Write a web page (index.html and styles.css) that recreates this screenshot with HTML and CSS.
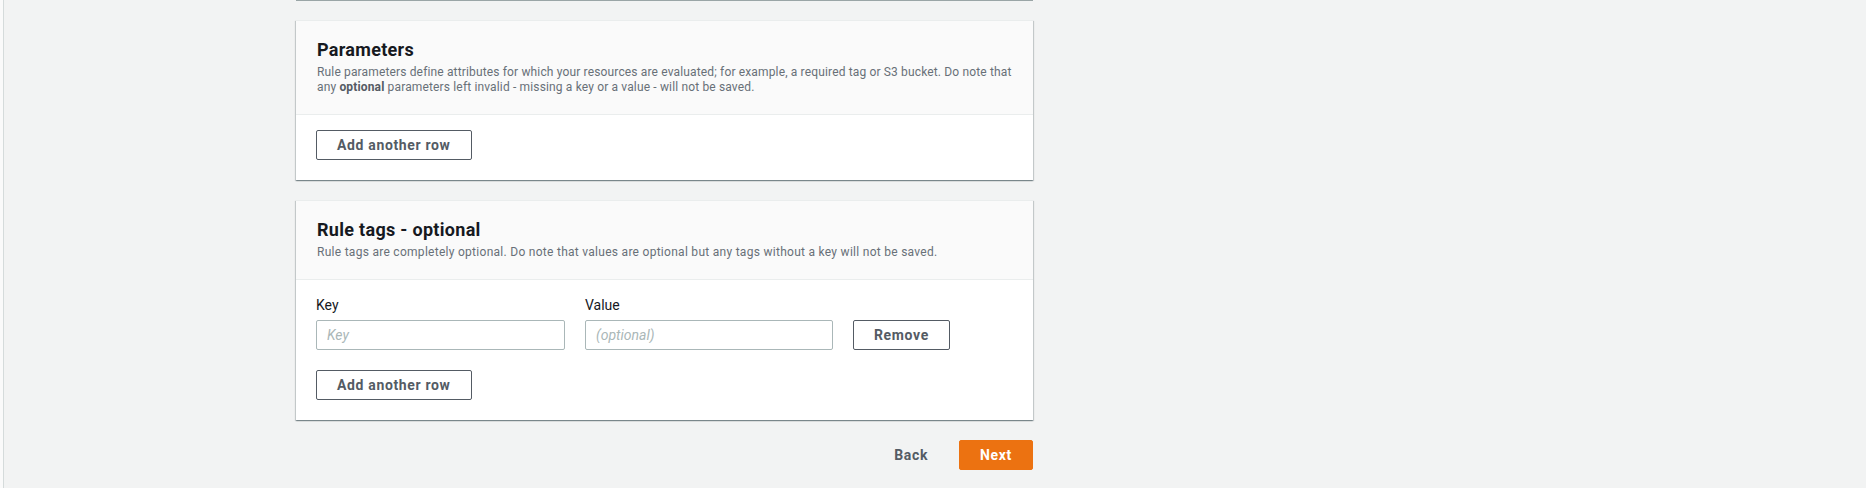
FILE: index.html
```html
<!DOCTYPE html>
<html lang="en">
<head>
<meta charset="utf-8">
<title>Rule settings</title>
<link rel="stylesheet" href="styles.css">
</head>
<body>
<div class="page">
  <div class="column">
    <div class="prev-card"></div>

    <section class="card">
      <header class="card-header">
        <h2 class="card-title">Parameters</h2>
        <p class="card-desc">Rule parameters define attributes for which your resources are evaluated; for example, a required tag or S3 bucket. Do note that any <b class="em">optional</b> parameters left invalid - missing a key or a value - will not be saved.</p>
      </header>
      <div class="card-body">
        <button class="btn" type="button">Add another row</button>
      </div>
    </section>

    <section class="card">
      <header class="card-header">
        <h2 class="card-title">Rule tags - optional</h2>
        <p class="card-desc card-desc-wide">Rule tags are completely optional. Do note that values are optional but any tags without a key will not be saved.</p>
      </header>
      <div class="card-body">
        <div class="tag-row">
          <label class="field-label" for="tag-key">Key</label>
          <label class="field-label" for="tag-value">Value</label>
          <span></span>
          <input class="input" id="tag-key" type="text" placeholder="Key">
          <input class="input" id="tag-value" type="text" placeholder="(optional)">
          <button class="btn" type="button">Remove</button>
        </div>
        <button class="btn" type="button">Add another row</button>
      </div>
    </section>

    <div class="actions">
      <button class="btn btn-link" type="button">Back</button>
      <button class="btn btn-primary" type="button">Next</button>
    </div>
  </div>
</div>
</body>
</html>
```

FILE: styles.css
```css
html, body {
  margin: 0;
  padding: 0;
}

body {
  background: #fafafa;
  font-family: Roboto, "Liberation Sans", Arial, sans-serif;
  color: #16191f;
}

.page {
  margin-left: 3px;
  border-left: 1px solid #d5dbdb;
  background: #f2f3f3;
  min-height: 488px;
  padding-left: 292px;
}

.column {
  width: 737px;
}

.prev-card {
  height: 1px;
  background: #9aa5a6;
}

.card {
  margin-top: 19px;
  background: #fff;
  border-top: 1px solid #eaeded;
  box-shadow: 0 1px 1px 0 rgba(0, 28, 36, 0.3),
              1px 1px 1px 0 rgba(0, 28, 36, 0.15),
              -1px 1px 1px 0 rgba(0, 28, 36, 0.15);
}

.card + .card {
  margin-top: 20px;
}

.card-header {
  background: #fafafa;
  border-bottom: 1px solid #eaeded;
  padding: 18px 20px 19px 21px;
}

.card-title {
  margin: 0;
  font-size: 18px;
  line-height: 22px;
  font-weight: 700;
  letter-spacing: 0.3px;
  color: #16191f;
}

.card-desc {
  margin: 4px 0 0;
  font-size: 12px;
  line-height: 15px;
  letter-spacing: 0.15px;
  color: #687078;
}

.card-desc-wide {
  letter-spacing: 0.28px;
}

.card-desc .em {
  color: #545b64;
  font-weight: 700;
}

.card-body {
  padding: 15px 20px 20px 20px;
}

.btn {
  box-sizing: border-box;
  height: 30px;
  padding: 4px 20px;
  border: 1px solid #545b64;
  border-radius: 2px;
  background: #fff;
  color: #545b64;
  font-family: inherit;
  font-size: 14px;
  line-height: 20px;
  font-weight: 700;
  letter-spacing: 0.65px;
  cursor: pointer;
}

.tag-row {
  display: grid;
  grid-template-columns: 249px 248px auto;
  column-gap: 20px;
  row-gap: 5px;
  justify-items: start;
  margin-bottom: 20px;
}

.field-label {
  font-size: 14px;
  line-height: 20px;
  color: #16191f;
}

.input {
  box-sizing: border-box;
  width: 100%;
  height: 30px;
  margin: 0;
  padding: 4px 10px;
  border: 1px solid #aab7b8;
  border-radius: 2px;
  background: #fff;
  font-family: inherit;
  font-size: 14px;
  line-height: 20px;
  color: #16191f;
}

.input::placeholder {
  color: #aab7b8;
  font-style: italic;
}

.actions {
  display: flex;
  justify-content: flex-end;
  gap: 10px;
  margin-top: 20px;
}

.btn-link {
  border-color: transparent;
  background: transparent;
}

.btn-primary {
  border-color: #ec7211;
  background: #ec7211;
  color: #fff;
}
```
